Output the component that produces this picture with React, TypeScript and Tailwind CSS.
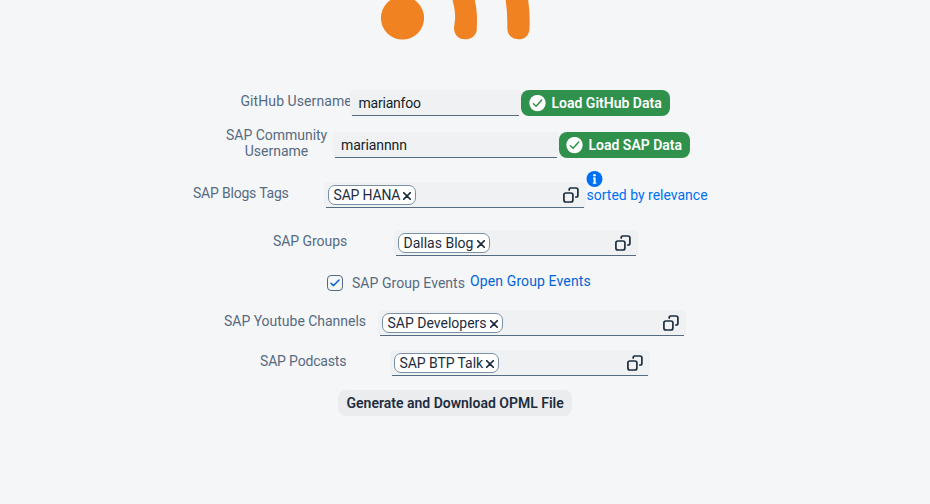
import type { ReactNode } from "react";

function ValueHelpIcon() {
  return (
    <svg width="16" height="16" viewBox="0 0 16 16" fill="none" stroke="#1d2d3e" strokeWidth="1.7" strokeLinecap="round" className="shrink-0">
      <rect x="0.9" y="6" width="9" height="9" rx="2" />
      <path d="M6.2 3.1V2.7Q6.2 1 7.9 1H13Q14.9 1 14.9 2.9V8.2Q14.9 10 13.2 10H12.8" />
    </svg>
  );
}

function CheckBadge() {
  return (
    <svg width="17" height="17" viewBox="0 0 17 17" fill="none" className="shrink-0">
      <circle cx="8.5" cy="8.1" r="8.2" fill="#fff" />
      <path d="M4.4 8.7 7.1 11.2 12.7 5" stroke="#30914c" strokeWidth="1.5" strokeLinecap="round" strokeLinejoin="round" />
    </svg>
  );
}

function Field({ className, children }: { className: string; children: ReactNode }) {
  return (
    <div className={`h-[26px] shrink-0 flex flex-col rounded-[4px] bg-[#eff1f2] ${className}`}>
      <div className="flex-1 flex items-center">{children}</div>
      <div className="h-px mx-[2px] bg-[#556b82]" />
    </div>
  );
}

function Token({ text, className }: { text: string; className: string }) {
  return (
    <div className={`ml-1 mt-px h-5 shrink-0 flex items-center justify-between rounded-[7px] border border-[#788fa6] bg-white pl-[4.5px] pr-1 text-[#1d2d3e] ${className}`}>
      <span>{text}</span>
      <svg width="8" height="8" viewBox="0 0 8 8" stroke="#1d2d3e" strokeWidth="1.5" strokeLinecap="round" className="mt-px">
        <path d="M0.6 0.6 7.4 7.4M7.4 0.6 0.6 7.4" />
      </svg>
    </div>
  );
}

function TokenField({ className, text, tokenClass }: { className: string; text: string; tokenClass: string }) {
  return (
    <Field className={className}>
      <Token text={text} className={tokenClass} />
      <div className="ml-auto mr-[7.5px] mt-px flex">
        <ValueHelpIcon />
      </div>
    </Field>
  );
}

function Label({ className, children }: { className: string; children: ReactNode }) {
  return <div className={`shrink-0 leading-4 text-[#556b82] ${className}`}>{children}</div>;
}

export default function App() {
  return (
    <div className="w-[930px] h-[504px] overflow-hidden bg-[#f5f6f7] font-['Roboto',sans-serif] text-[14px] leading-4 whitespace-nowrap">
      <svg width="930" height="90" viewBox="0 0 930 90" fill="#f08222" className="block">
        <circle cx="402.5" cy="18" r="21.6" />
        <path d="M452.5 0H474.8Q477.8 12 476.8 30C476 36 471 39.3 465 39.3C458 39.3 454 34 454 28Q454.3 25 455 20Q455.8 12 452.5 0Z" />
        <path d="M505.7 0H528.2Q530.2 14 529.5 29C529 36 524.5 39.3 518.5 39.3C512 39.3 507.3 35 507.3 28Q507.6 13 505.7 0Z" />
      </svg>

      <div className="flex h-[42px] items-start pl-[240px]">
        <Label className="w-[110px] mt-[3px] pl-[0.5px] tracking-[0.08px]">GitHub Username</Label>
        <Field className="w-[171px]">
          <span className="pl-[8.5px] mt-px tracking-[-0.22px] text-[#131e29]">marianfoo</span>
        </Field>
        <button className="w-[149px] h-[26px] flex items-center gap-[5.5px] rounded-[8px] bg-[#30914c] pl-2 font-semibold text-white">
          <CheckBadge />
          Load GitHub Data
        </button>
      </div>

      <div className="flex h-[50px] items-start pl-[226px]">
        <Label className="w-[101px] mt-[-5px] text-center tracking-[-0.02px]">
          SAP Community
          <br />
          Username
        </Label>
        <Field className="ml-[6px] w-[226px]">
          <span className="pl-2 mt-px tracking-[-0.08px] text-[#131e29]">mariannnn</span>
        </Field>
        <button className="w-[131px] h-[26px] flex items-center gap-[5.5px] rounded-[8px] bg-[#30914c] pl-[7px] font-semibold text-white">
          <CheckBadge />
          Load SAP Data
        </button>
      </div>

      <div className="flex h-[48px] items-start pl-[193px]">
        <Label className="w-[131px] mt-[3px] tracking-[-0.2px]">SAP Blogs Tags</Label>
        <TokenField className="w-[262px]" text="SAP HANA" tokenClass="w-[88px] tracking-[-0.18px]" />
        <div className="mt-[-11px] flex flex-col text-[#0070f2]">
          <svg width="17" height="16" viewBox="0 0 17 16">
            <circle cx="8.5" cy="8" r="8" fill="#0070f2" />
            <circle cx="8.5" cy="4.2" r="1.3" fill="#fff" />
            <path d="M7 6.6H9.6V11.6H10.3V12.7H6.9V11.6H7.6V7.7H7Z" fill="#fff" />
          </svg>
          <span className="pl-[0.5px]">sorted by relevance</span>
        </div>
      </div>

      <div className="flex h-[45px] items-start pl-[273px]">
        <Label className="w-[121px] mt-[3px] tracking-[-0.05px]">SAP Groups</Label>
        <TokenField className="w-[244px]" text="Dallas Blog" tokenClass="w-[92px]" />
      </div>

      <div className="flex h-[35px] items-start pl-[327px]">
        <div className="w-4 h-4 rounded-[4px] border border-[#556b82] flex items-center justify-center">
          <svg width="10" height="8" viewBox="0 0 10 8" fill="none" stroke="#0064d9" strokeWidth="1.5" strokeLinecap="round" strokeLinejoin="round">
            <path d="M1 4.3 3.6 6.6 9 1" />
          </svg>
        </div>
        <Label className="ml-[9px] w-[118px] tracking-[0.04px]">SAP Group Events</Label>
        <a className="mt-[-2px] text-[#0064d9] tracking-[0.12px]">Open Group Events</a>
      </div>

      <div className="flex h-[40px] items-start pl-[224px]">
        <Label className="w-[154px] mt-[3px] tracking-[-0.02px]">SAP Youtube Channels</Label>
        <TokenField className="w-[308px]" text="SAP Developers" tokenClass="w-[121px]" />
      </div>

      <div className="flex h-[40px] items-start pl-[260px]">
        <Label className="w-[130px] mt-[3px] tracking-[-0.17px]">SAP Podcasts</Label>
        <TokenField className="w-[260px]" text="SAP BTP Talk" tokenClass="w-[105px] tracking-[-0.07px]" />
      </div>

      <div className="flex pl-[338px]">
        <button className="w-[234px] h-[26px] rounded-[8px] bg-[#eaecee] pl-[8.5px] text-left font-semibold text-[#1d2d3e]">
          Generate and Download OPML File
        </button>
      </div>
    </div>
  );
}
